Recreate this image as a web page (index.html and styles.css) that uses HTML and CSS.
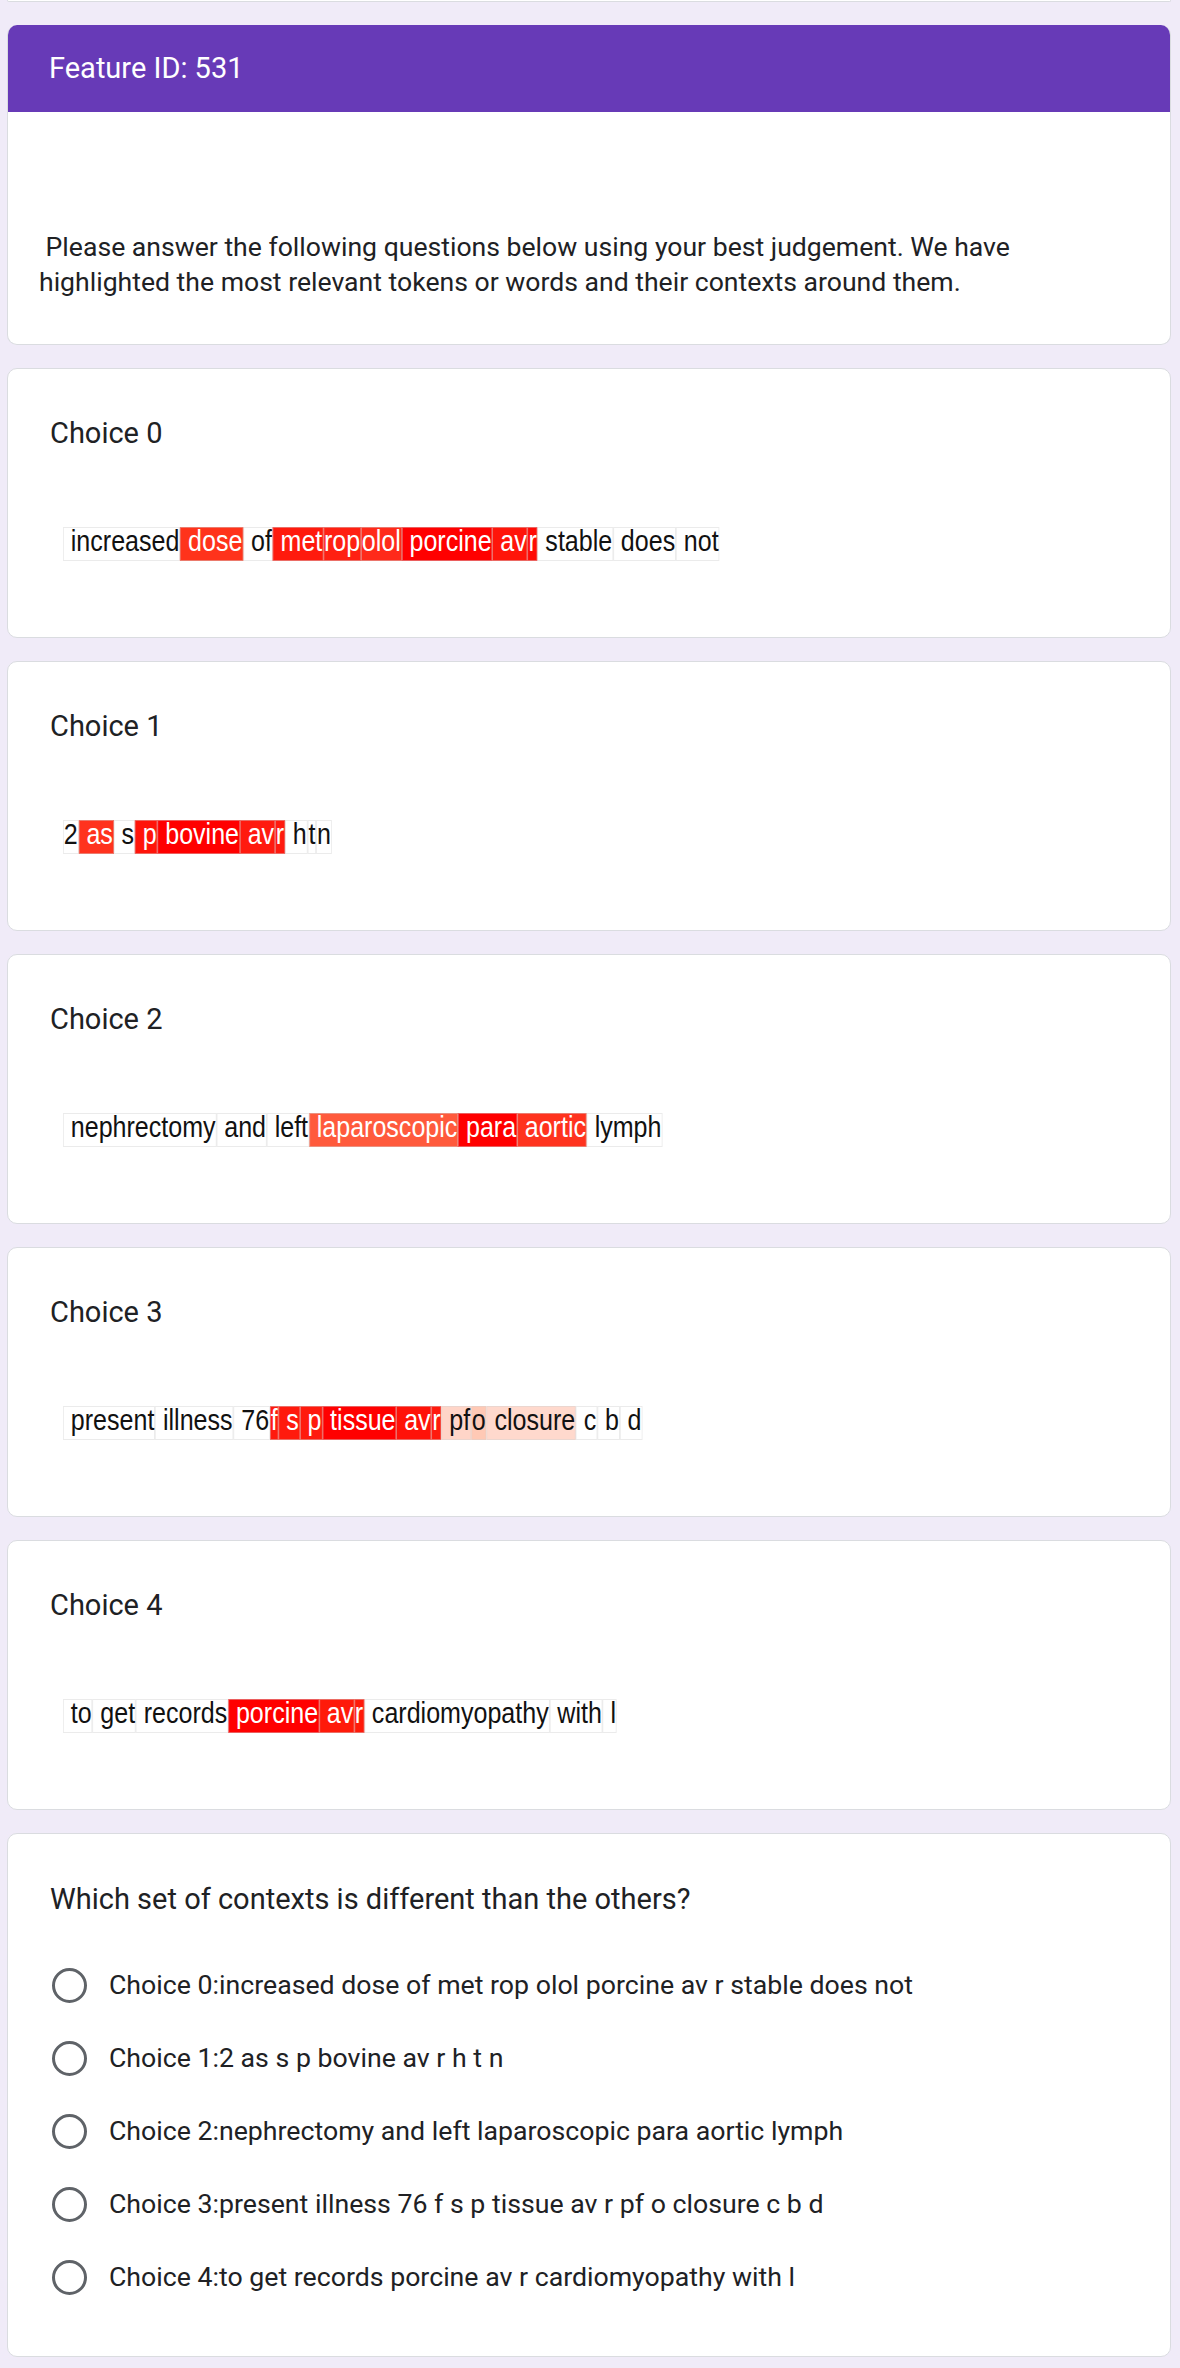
FILE: index.html
```html
<!DOCTYPE html>
<html lang="en">
<head>
<meta charset="utf-8">
<title>Feature ID: 531</title>
<link rel="stylesheet" href="styles.css">
</head>
<body>
<div class="page">
  <div class="prev-card"></div>

  <div class="card header-card">
    <div class="band"><h1 class="title">Feature ID: 531</h1></div>
    <p class="desc">&nbsp;Please answer the following questions below using your best judgement. We have highlighted the most relevant tokens or words and their contexts around them.</p>
  </div>

  <div class="card choice-card">
    <h2 class="choice-label">Choice 0</h2>
    <div class="tokens">
      <span class="tok"> increased</span><span class="tok hot" style="background:#ff331b"> dose</span><span class="tok"> of</span><span class="tok hot" style="background:#ff1a0d"> met</span><span class="tok hot" style="background:#ff2012">rop</span><span class="tok hot" style="background:#ff2a1a">olol</span><span class="tok hot" style="background:#ff0000"> porcine</span><span class="tok hot" style="background:#ff150a"> av</span><span class="tok hot" style="background:#ff0a05">r</span><span class="tok"> stable</span><span class="tok"> does</span><span class="tok"> not</span>
    </div>
  </div>

  <div class="card choice-card">
    <h2 class="choice-label">Choice 1</h2>
    <div class="tokens">
      <span class="tok">2</span><span class="tok hot" style="background:#ff331e"> as</span><span class="tok"> s</span><span class="tok hot" style="background:#ff140a"> p</span><span class="tok hot" style="background:#ff0000"> bovine</span><span class="tok hot" style="background:#ff1a0f"> av</span><span class="tok hot" style="background:#ff1a0f">r</span><span class="tok"> h</span><span class="tok">t</span><span class="tok">n</span>
    </div>
  </div>

  <div class="card choice-card">
    <h2 class="choice-label">Choice 2</h2>
    <div class="tokens">
      <span class="tok"> nephrectomy</span><span class="tok"> and</span><span class="tok"> left</span><span class="tok hot" style="background:#ff5a3c"> laparoscopic</span><span class="tok hot" style="background:#ff0000"> para</span><span class="tok hot" style="background:#ff331e"> aortic</span><span class="tok"> lymph</span>
    </div>
  </div>

  <div class="card choice-card">
    <h2 class="choice-label">Choice 3</h2>
    <div class="tokens">
      <span class="tok"> present</span><span class="tok"> illness</span><span class="tok"> 76</span><span class="tok hot" style="background:#ff1a0d">f</span><span class="tok hot" style="background:#ff1a0d"> s</span><span class="tok hot" style="background:#ff1a0d"> p</span><span class="tok hot" style="background:#ff0000"> tissue</span><span class="tok hot" style="background:#ff1208"> av</span><span class="tok hot" style="background:#ff1a0d">r</span><span class="tok" style="background:#ffd5c8"> pf</span><span class="tok" style="background:#ffc9b5">o</span><span class="tok" style="background:#ffd9cd"> closure</span><span class="tok"> c</span><span class="tok"> b</span><span class="tok"> d</span>
    </div>
  </div>

  <div class="card choice-card">
    <h2 class="choice-label">Choice 4</h2>
    <div class="tokens">
      <span class="tok"> to</span><span class="tok"> get</span><span class="tok"> records</span><span class="tok hot" style="background:#ff0000"> porcine</span><span class="tok hot" style="background:#ff1a0a"> av</span><span class="tok hot" style="background:#ff1a0a">r</span><span class="tok"> cardiomyopathy</span><span class="tok"> with</span><span class="tok"> l</span>
    </div>
  </div>

  <div class="card question-card">
    <h2 class="question">Which set of contexts is different than the others?</h2>
    <div class="options">
      <label class="option"><span class="radio"></span><span class="opt-text">Choice 0:increased dose of met rop olol porcine av r stable does not</span></label>
      <label class="option"><span class="radio"></span><span class="opt-text">Choice 1:2 as s p bovine av r h t n</span></label>
      <label class="option"><span class="radio"></span><span class="opt-text">Choice 2:nephrectomy and left laparoscopic para aortic lymph</span></label>
      <label class="option"><span class="radio"></span><span class="opt-text">Choice 3:present illness 76 f s p tissue av r pf o closure c b d</span></label>
      <label class="option"><span class="radio"></span><span class="opt-text">Choice 4:to get records porcine av r cardiomyopathy with l</span></label>
    </div>
  </div>
</div>
</body>
</html>
```

FILE: styles.css
```css
html, body {
  margin: 0;
  padding: 0;
}

body {
  background: #f0ebf8;
  font-family: Roboto, "Noto Sans", "Liberation Sans", Arial, sans-serif;
  color: #202124;
}

.page {
  display: flex;
  flex-direction: column;
  gap: 23px;
  padding: 0 9px 11px 7px;
}

.prev-card {
  height: 1px;
  background: #ffffff;
  border: 1px solid #dadce0;
  border-top: 0;
  border-radius: 0 0 10px 10px;
}

.card {
  background: #ffffff;
  border: 1px solid #dadce0;
  border-radius: 10px;
  overflow: hidden;
}

.header-card {
  border-top: 0;
}

.band {
  background: #673ab7;
  padding: 25px 0 26px 41px;
}

.title {
  margin: 0;
  font-size: 29px;
  line-height: 36px;
  font-weight: 400;
  color: #ffffff;
}

.desc {
  margin: 0;
  padding: 117px 31px 45px;
  font-size: 26.6px;
  line-height: 35px;
}

.choice-card {
  padding: 46px 42px 76px;
}

.choice-label {
  margin: 0;
  font-size: 29px;
  line-height: 36px;
  font-weight: 400;
}

/* Arial Narrow look: Arial metrics compressed horizontally */
.tokens {
  display: flex;
  margin: 76px 0 0 13px;
  transform: scaleX(0.835);
  transform-origin: 0 0;
}

.tok {
  white-space: pre;
  font-family: "Liberation Sans", Arial, sans-serif;
  font-size: 30px;
  line-height: 25px;
  padding-bottom: 7px;
  color: #111111;
  border: 1px solid rgba(210, 210, 210, 0.45);
}

.tok.hot {
  color: #ffffff;
}

.question-card {
  padding: 47px 42px 42px;
}

.question {
  margin: 0 0 32px;
  font-size: 29px;
  line-height: 36px;
  font-weight: 400;
}

.options {
  display: flex;
  flex-direction: column;
}

.option {
  display: flex;
  align-items: center;
  gap: 22px;
  height: 73px;
  padding-left: 2px;
  font-size: 26.7px;
  line-height: 35px;
}

.radio {
  flex: none;
  width: 35px;
  height: 35px;
  box-sizing: border-box;
  border: 3px solid #5f6368;
  border-radius: 50%;
}
```
